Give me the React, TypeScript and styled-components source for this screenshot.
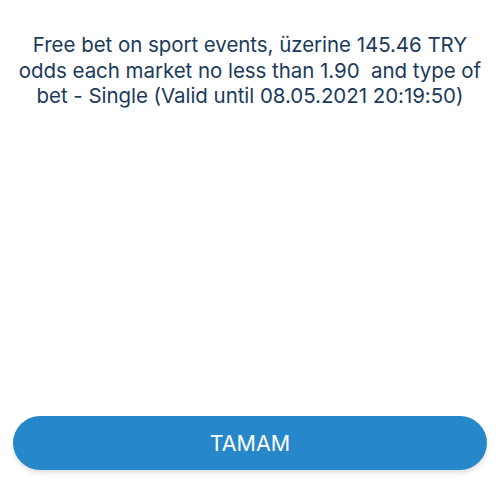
import React from "react";
import styled, { createGlobalStyle } from "styled-components";

const Global = createGlobalStyle`
  html, body { margin: 0; padding: 0; background: #ffffff; }
  body { font-family: Inter, "Noto Sans", sans-serif; }
`;

const Page = styled.div`
  width: 500px;
  height: 498px;
  display: flex;
  flex-direction: column;
  justify-content: space-between;
  box-sizing: border-box;
  padding: 32px 13px 28px;
`;

const Message = styled.p`
  margin: 0;
  text-align: center;
  white-space: nowrap;
  font-family: Inter, "Noto Sans", sans-serif;
  font-size: 20.5px;
  line-height: 25.5px;
  color: #1b3a5c;
  letter-spacing: -0.05px;
`;

const OkButton = styled.button`
  height: 54px;
  width: 100%;
  border: none;
  border-radius: 27px;
  background: #2787cb;
  color: #ffffff;
  font-family: Inter, "Noto Sans", sans-serif;
  font-size: 21.5px;
  box-shadow: 0 3px 4px rgba(0, 0, 0, 0.12);
  cursor: pointer;
`;

export default function App() {
  return (
    <>
      <Global />
      <Page>
        <Message>
          Free bet on sport events, üzerine 145.46 TRY
          <br />
          odds each market no less than 1.90&nbsp; and type of
          <br />
          bet - Single (Valid until 08.05.2021 20:19:50)
        </Message>
        <OkButton>TAMAM</OkButton>
      </Page>
    </>
  );
}
